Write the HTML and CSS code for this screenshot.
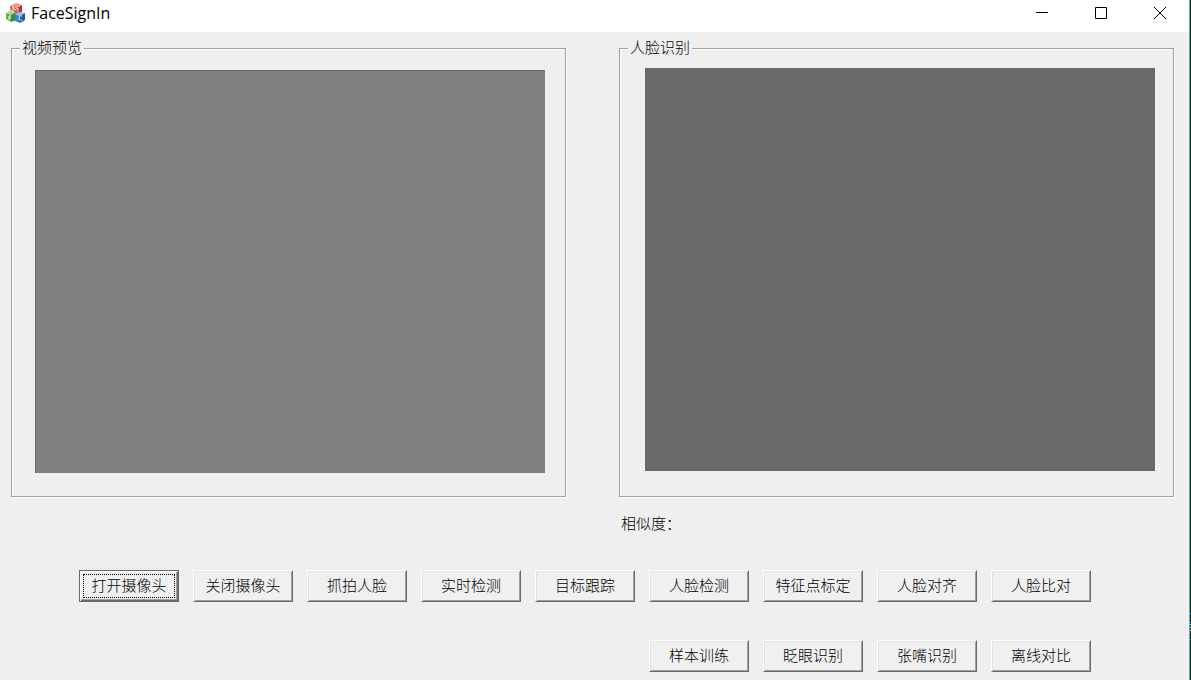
FILE: index.html
```html
<!DOCTYPE html>
<html lang="zh-CN">
<head>
<meta charset="utf-8">
<title>FaceSignIn</title>
<link rel="stylesheet" href="styles.css">
</head>
<body>
<div class="window">
  <header class="titlebar">
    <svg class="app-icon" viewBox="0 0 20 20" aria-hidden="true">
      <path fill="#ef9a8c" d="M4 3 10 0l6 2-5 3z"/>
      <path fill="#dc5040" d="M4 3l7 2v7l-6-2z"/>
      <path fill="#b8342a" d="M11 5l5-3v7l-5 3z"/>
      <path fill="#b4dc90" d="M0 10l5-3 5 2-5 3z"/>
      <path fill="#62ab46" d="M0 10l5 2v7l-5-3z"/>
      <path fill="#3c8a34" d="M5 12l5-3v8l-5 2z"/>
      <path fill="#8cc0e8" d="M8 11l5-2 6 1-5 3z"/>
      <path fill="#3a86c6" d="M8 11l6 2v7l-5-2z"/>
      <path fill="#1f5ca2" d="M14 13l5-3v7l-5 3z"/>
      <path fill="none" stroke="#fff" stroke-opacity=".85" d="M7 8V4l2 3 3-2v4M3 17v-4h2M3 15h2M16 13c-4-1-4 5 0 4"/>
    </svg>
    <h1 class="title">FaceSignIn</h1>
    <div class="controls">
      <button class="control" type="button" aria-label="最小化"><svg viewBox="0 0 14 14"><path d="M1 6.500h12"/></svg></button>
      <button class="control" type="button" aria-label="最大化"><svg viewBox="0 0 14 14"><path d="M1.500 1.500h11v11h-11z"/></svg></button>
      <button class="control" type="button" aria-label="关闭"><svg viewBox="0 0 14 14"><path d="M1 1l12 12M13 1L1 13"/></svg></button>
    </div>
  </header>
  <main class="client">
    <div class="groups">
      <fieldset class="group">
        <legend>视频预览</legend>
        <div class="preview preview-video"></div>
      </fieldset>
      <fieldset class="group">
        <legend>人脸识别</legend>
        <div class="preview preview-face"></div>
      </fieldset>
      <p class="similarity">相似度：</p>
    </div>
    <div class="actions">
      <button class="action is-default" type="button"><span>打开摄像头</span></button>
      <button class="action" type="button">关闭摄像头</button>
      <button class="action" type="button">抓拍人脸</button>
      <button class="action" type="button">实时检测</button>
      <button class="action" type="button">目标跟踪</button>
      <button class="action" type="button">人脸检测</button>
      <button class="action" type="button">特征点标定</button>
      <button class="action" type="button">人脸对齐</button>
      <button class="action" type="button">人脸比对</button>
      <button class="action row-start" type="button">样本训练</button>
      <button class="action" type="button">眨眼识别</button>
      <button class="action" type="button">张嘴识别</button>
      <button class="action" type="button">离线对比</button>
    </div>
  </main>
</div>
<div class="desktop-edge"></div>
</body>
</html>
```

FILE: styles.css
```css
* {
  box-sizing: border-box;
}

body {
  margin: 0;
  min-height: 100vh;
  display: flex;
  background: #efefef;
  color: #000;
  font: 300 15px/18px "Liberation Sans", "Noto Sans CJK SC", sans-serif;
}

.window {
  flex: 1;
  min-width: 0;
  border-right: 1px solid #55a9c4;
}

.desktop-edge {
  width: 1px;
  background:
    linear-gradient(#2878c8, #2878c8) 0 613px / 1px 1px no-repeat,
    linear-gradient(#2878c8, #2878c8) 0 622px / 1px 1px no-repeat,
    repeating-linear-gradient(#ccc 0 1px, #222 1px 3px) 0 624px / 1px 9px no-repeat,
    linear-gradient(#2878c8, #2878c8) 0 639px / 1px 1px no-repeat,
    #1e2223;
}

.titlebar {
  display: flex;
  align-items: center;
  height: 32px;
  padding-left: 6px;
  background: #fff;
}

.app-icon {
  width: 20px;
  height: 20px;
  margin-bottom: 6px;
}

.title {
  margin: 0 0 6px 5px;
  font: 400 16px/20px "Open Sans", "Noto Sans", sans-serif;
}

.controls {
  display: flex;
  align-self: flex-start;
  margin-left: auto;
}

.control {
  display: flex;
  align-items: center;
  justify-content: center;
  width: 59px;
  height: 26px;
  padding: 0;
  border: 0;
  background: none;
}

.control svg {
  width: 14px;
  height: 14px;
  fill: none;
  stroke: #000;
}

.client {
  padding: 7px 15px 8px 11px;
}

.groups {
  display: grid;
  grid-template-columns: 1fr 1fr;
  column-gap: 53px;
}

.group {
  min-width: 0;
  margin: 0;
  padding: 13px 20px 23px 8px;
  border: 1px solid #a0a0a0;
  box-shadow: 1px 1px 0 #fff, inset 1px 1px 0 #fff;
}

.group legend {
  padding: 0 2px;
  background: #efefef;
}

.preview {
  aspect-ratio: 510 / 403;
  margin-left: 15px;
}

.preview-video {
  border: solid #696969;
  border-width: 1px 0 0 1px;
  background: #808080;
}

.preview-face {
  margin: -2px -2px 2px 17px;
  background: #696969;
}

.similarity {
  grid-column: 2;
  margin: 18px 0 0 2px;
}

.actions {
  display: grid;
  grid-template-columns: repeat(9, 1fr);
  gap: 38px 14px;
  margin-top: 37px;
  padding: 0 83px 0 68px;
}

.action {
  height: 32px;
  padding: 0;
  border: 1px solid;
  border-color: #fff #696969 #696969 #fff;
  background: #f0f0f0;
  box-shadow: inset 1px 1px 0 #e3e3e3, inset -1px -1px 0 #a0a0a0;
  color: #000;
  font: inherit;
  white-space: nowrap;
}

.row-start {
  grid-column: 6;
}

.is-default {
  padding: 3px;
  border-color: #696969;
  box-shadow: inset 1px 1px 0 #fff, inset -1px -1px 0 #696969, inset -2px -2px 0 #a0a0a0;
}

.is-default span {
  display: flex;
  align-items: center;
  justify-content: center;
  height: 100%;
  outline: 1px dotted #000;
  outline-offset: -1px;
}
```
